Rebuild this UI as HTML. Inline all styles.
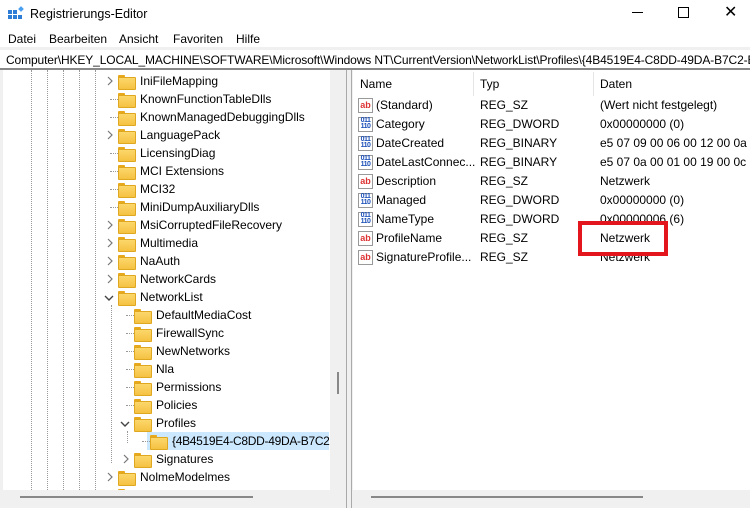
<!DOCTYPE html>
<html><head><meta charset="utf-8"><style>
*{margin:0;padding:0;box-sizing:border-box}
body{width:750px;height:508px;overflow:hidden;background:#fff;font-family:"Liberation Sans",sans-serif;font-size:12px;color:#000;position:relative}
.a{position:absolute;white-space:nowrap}
.fold{position:absolute;width:16px;height:12px}
.fold:before{content:"";position:absolute;left:0;top:0;width:7px;height:3px;background:#e8a81c;border-radius:1px 1px 0 0}
.fold:after{content:"";position:absolute;left:0;top:2px;width:16px;height:11px;background:linear-gradient(#fcd76b,#f5c242);border:1px solid #e0a820;border-radius:1px}
.vd{position:absolute;top:70px;height:420px;width:1px;border-left:1px dotted #999}
.hd{position:absolute;height:1px;width:8px;border-top:1px dotted #999}
.chev{position:absolute}
.ic{position:absolute;width:15px;height:15px;font-size:9px;font-weight:bold;line-height:13px;text-align:center}
.ab{border:1px solid #999;color:#d33;background:#fff}
.bn{border:1px solid #999;color:#1a4fb8;background:#fff;font-size:7px;line-height:6px;letter-spacing:-0.5px}
</style></head><body>
<div class="a" style="left:8px;top:6px;width:14px;height:14px">
<svg width="16" height="16"><rect x="0" y="4" width="4" height="4" fill="#2d7cd6"/><rect x="5" y="4" width="4" height="4" fill="#2d7cd6"/><rect x="0" y="9" width="4" height="4" fill="#2d7cd6"/><rect x="5" y="9" width="4" height="4" fill="#2d7cd6"/><rect x="10" y="9" width="4" height="4" fill="#2d7cd6"/><rect x="11" y="1" width="4" height="4" fill="#4aa0f0" transform="rotate(45 13 3)"/></svg></div>
<div class="a" style="left:30px;top:7px;font-size:12.5px">Registrierungs-Editor</div>
<div class="a" style="left:632px;top:12px;width:11px;height:1px;background:#000"></div>
<div class="a" style="left:678px;top:7px;width:11px;height:11px;border:1px solid #000"></div>
<div class="a" style="left:724px;top:2px;font-size:16px;font-weight:300">✕</div>
<div class="a" style="left:8px;top:32px">Datei</div>
<div class="a" style="left:49px;top:32px">Bearbeiten</div>
<div class="a" style="left:119px;top:32px">Ansicht</div>
<div class="a" style="left:173px;top:32px">Favoriten</div>
<div class="a" style="left:236px;top:32px">Hilfe</div>
<div class="a" style="left:0;top:47px;width:750px;height:3px;background:#f0f0f0"></div>
<div class="a" style="left:6px;top:53px;font-size:12px;letter-spacing:-0.12px">Computer\HKEY_LOCAL_MACHINE\SOFTWARE\Microsoft\Windows NT\CurrentVersion\NetworkList\Profiles\{4B4519E4-C8DD-49DA-B7C2-B</div>
<div class="a" style="left:0;top:68px;width:750px;height:2px;background:#888"></div>
<div class="vd" style="left:31px"></div><div class="vd" style="left:47px"></div><div class="vd" style="left:63px"></div><div class="vd" style="left:79px"></div>
<div class="a" style="left:0;top:70px;width:3px;height:420px;background:#f0f0f0"></div>
<div class="a" style="left:95px;top:70px;height:420px;border-left:1px dotted #999"></div>
<div class="a" style="left:111px;top:305px;height:158px;border-left:1px dotted #999"></div>
<div class="a" style="left:127px;top:431px;height:12px;border-left:1px dotted #999"></div>
<div class="a" style="left:147px;top:432px;width:182px;height:18px;background:#cce8ff"></div>
<div id="tree"></div>
<div class="a" style="left:330px;top:70px;width:15px;height:420px;background:#f0f0f0"></div>
<div class="a" style="left:337px;top:372px;width:2px;height:22px;background:#888"></div>
<div class="a" style="left:345px;top:70px;width:8px;height:438px;background:#f0f0f0"></div>
<div class="a" style="left:346px;top:70px;width:1px;height:438px;background:#aaa"></div>
<div class="a" style="left:351px;top:70px;width:1px;height:438px;background:#aaa"></div>
<div class="a" style="left:0;top:490px;width:345px;height:18px;background:#f0f0f0"></div>
<div class="a" style="left:20px;top:496px;width:233px;height:2px;background:#888"></div>
<div class="a" style="left:353px;top:490px;width:397px;height:18px;background:#f0f0f0"></div>
<div class="a" style="left:371px;top:496px;width:272px;height:2px;background:#888"></div>
<div class="a" style="left:360px;top:77px">Name</div>
<div class="a" style="left:480px;top:77px">Typ</div>
<div class="a" style="left:600px;top:77px">Daten</div>
<div class="a" style="left:473px;top:72px;width:1px;height:24px;background:#e5e5e5"></div>
<div class="a" style="left:593px;top:72px;width:1px;height:24px;background:#e5e5e5"></div>
<div id="vals"></div>
<div class="a" style="left:578px;top:221px;width:90px;height:35px;border:4px solid #e3161e"></div>
<script>
var t=[[0,1,'>','IniFileMapping'],[1,1,'.','KnownFunctionTableDlls'],[2,1,'.','KnownManagedDebuggingDlls'],[3,1,'>','LanguagePack'],[4,1,'.','LicensingDiag'],[5,1,'.','MCI Extensions'],[6,1,'.','MCI32'],[7,1,'.','MiniDumpAuxiliaryDlls'],[8,1,'>','MsiCorruptedFileRecovery'],[9,1,'>','Multimedia'],[10,1,'>','NaAuth'],[11,1,'>','NetworkCards'],[12,1,'v','NetworkList'],[13,2,'.','DefaultMediaCost'],[14,2,'.','FirewallSync'],[15,2,'.','NewNetworks'],[16,2,'.','Nla'],[17,2,'.','Permissions'],[18,2,'.','Policies'],[19,2,'v','Profiles'],[20,3,'.','{4B4519E4-C8DD-49DA-B7C2-'],[21,2,'>','Signatures'],[22,1,'>','NolmeModelmes'],[23,1,'.','']];
var h='';t.forEach(function(r){var y=81+18*r[0];var fx=118+(r[1]-1)*16;
if(r[2]=='>')h+='<svg class="chev" width="8" height="10" style="left:'+(fx-12)+'px;top:'+(y-5)+'px"><polyline points="2,1 6,5 2,9" fill="none" stroke="#777" stroke-width="1.2"/></svg>';
else if(r[2]=='v')h+='<svg class="chev" width="10" height="8" style="left:'+(fx-14)+'px;top:'+(y-3)+'px"><polyline points="1,2 5,6 9,2" fill="none" stroke="#444" stroke-width="1.4"/></svg>';
else h+='<div class="hd" style="top:'+y+'px;left:'+(fx-8)+'px"></div>';
h+='<div class="fold" style="left:'+fx+'px;top:'+(y-6)+'px"></div>';
if(r[3])h+='<div class="a" style="left:'+(fx+22)+'px;top:'+(y-7)+'px'+(r[1]==3?';letter-spacing:-0.3px':'')+'">'+r[3]+'</div>';});
document.getElementById('tree').innerHTML=h;
var v=[['ab','(Standard)','REG_SZ','(Wert nicht festgelegt)'],['bn','Category','REG_DWORD','0x00000000 (0)'],['bn','DateCreated','REG_BINARY','e5 07 09 00 06 00 12 00 0a 00'],['bn','DateLastConnec...','REG_BINARY','e5 07 0a 00 01 00 19 00 0c 00'],['ab','Description','REG_SZ','Netzwerk'],['bn','Managed','REG_DWORD','0x00000000 (0)'],['bn','NameType','REG_DWORD','0x00000006 (6)'],['ab','ProfileName','REG_SZ','Netzwerk'],['ab','SignatureProfile...','REG_SZ','Netzwerk']];
var g='';v.forEach(function(r,i){var y=105+19*i;
g+='<div class="ic '+r[0]+'" style="left:358px;top:'+(y-7)+'px">'+(r[0]=='ab'?'ab':'011<br>110')+'</div>';
g+='<div class="a" style="left:376px;top:'+(y-7)+'px">'+r[1]+'</div><div class="a" style="left:480px;top:'+(y-7)+'px">'+r[2]+'</div><div class="a" style="left:600px;top:'+(y-7)+'px">'+r[3]+'</div>';});
document.getElementById('vals').innerHTML=g;
</script>
</body></html>
